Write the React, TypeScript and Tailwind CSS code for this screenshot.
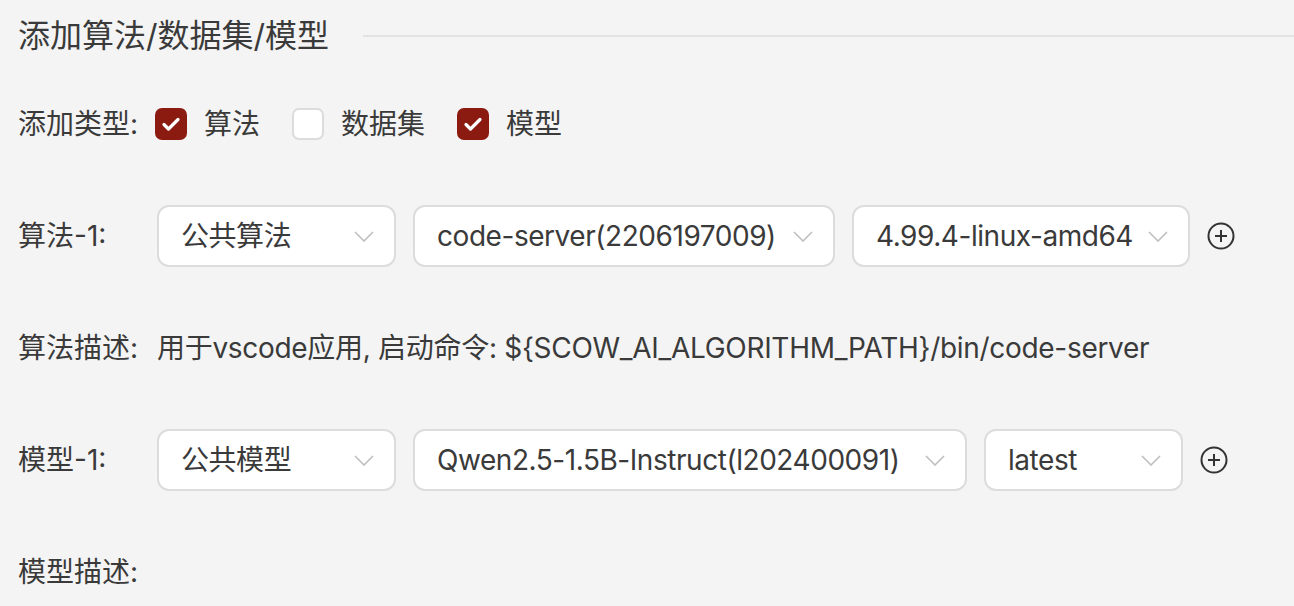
import { useState } from "react";

const font = "font-['Inter','Noto_Sans_CJK_SC',sans-serif]";

function Chevron() {
  return (
    <svg width="20" height="11" viewBox="0 0 20 11" fill="none" className="shrink-0">
      <path d="M1 1l9 9 9-9" stroke="#bfbfbf" strokeWidth="1.6" />
    </svg>
  );
}

function PlusCircle() {
  return (
    <svg width="28" height="28" viewBox="0 0 28 28" fill="none" className="shrink-0">
      <circle cx="14" cy="14" r="12.5" stroke="#333" strokeWidth="2" />
      <path d="M14 8v12M8 14h12" stroke="#333" strokeWidth="2" />
    </svg>
  );
}

function Select({ value, width }: { value: string; width: string }) {
  return (
    <div
      className={`${width} h-[62px] shrink-0 flex items-center justify-between rounded-[12px] border-2 border-[#dcdcdc] bg-white pl-[22px] pr-[20px]`}
    >
      <span className="text-[28px] tracking-[-0.45px] text-[#3a3a3a] whitespace-nowrap">{value}</span>
      <Chevron />
    </div>
  );
}

function Checkbox({ checked, label, onToggle }: { checked: boolean; label: string; onToggle: () => void }) {
  return (
    <button type="button" onClick={onToggle} className="flex items-center gap-[17px] mr-[32px]">
      {checked ? (
        <span className="w-[32px] h-[32px] rounded-[7px] bg-[#8b1a10] flex items-center justify-center">
          <svg width="20" height="16" viewBox="0 0 20 16" fill="none">
            <path d="M3 8.5l4.5 4.5L17 3.5" stroke="#fff" strokeWidth="3.2" strokeLinecap="round" strokeLinejoin="round" />
          </svg>
        </span>
      ) : (
        <span className="w-[32px] h-[32px] rounded-[7px] bg-white border-2 border-[#dcdcdc]" />
      )}
      <span className="text-[28px] text-[#3a3a3a]">{label}</span>
    </button>
  );
}

export default function App() {
  const [types, setTypes] = useState({ algo: true, data: false, model: true });

  return (
    <div className={`min-h-[606px] bg-[#f4f4f4] pl-[18px] pt-[14px] text-[#3a3a3a] ${font}`}>
      <div className="h-[44px] flex items-center">
        <h2 className="text-[32px] font-normal text-[#3a3a3a] whitespace-nowrap">添加算法/数据集/模型</h2>
        <div className="ml-[34px] flex-1 h-[2px] bg-[#e2e2e2]" />
      </div>

      <div className="mt-[35px] flex flex-col gap-[50px]">
        <div className="h-[62px] flex items-center">
          <span className="w-[137px] text-[28px]">添加类型:</span>
          <Checkbox checked={types.algo} label="算法" onToggle={() => setTypes({ ...types, algo: !types.algo })} />
          <Checkbox checked={types.data} label="数据集" onToggle={() => setTypes({ ...types, data: !types.data })} />
          <Checkbox checked={types.model} label="模型" onToggle={() => setTypes({ ...types, model: !types.model })} />
        </div>

        <div className="h-[62px] flex items-center">
          <span className="w-[139px] text-[28px]">算法-1:</span>
          <div className="flex items-center gap-[17px]">
            <Select value="公共算法" width="w-[239px]" />
            <Select value="code-server(2206197009)" width="w-[422px]" />
            <Select value="4.99.4-linux-amd64" width="w-[338px]" />
            <PlusCircle />
          </div>
        </div>

        <div className="h-[62px] flex items-center text-[28px] whitespace-nowrap">
          <span className="w-[139px]">算法描述:</span>
          <span className="tracking-[-0.3px]">
            用于vscode应用, 启动命令: ${"{"}SCOW_AI_ALGORITHM_PATH{"}"}/bin/code-server
          </span>
        </div>

        <div className="h-[62px] flex items-center">
          <span className="w-[139px] text-[28px]">模型-1:</span>
          <div className="flex items-center gap-[17px]">
            <Select value="公共模型" width="w-[239px]" />
            <Select value="Qwen2.5-1.5B-Instruct(l202400091)" width="w-[554px]" />
            <Select value="latest" width="w-[199px]" />
            <PlusCircle />
          </div>
        </div>

        <div className="h-[62px] flex items-center text-[28px]">模型描述:</div>
      </div>
    </div>
  );
}
